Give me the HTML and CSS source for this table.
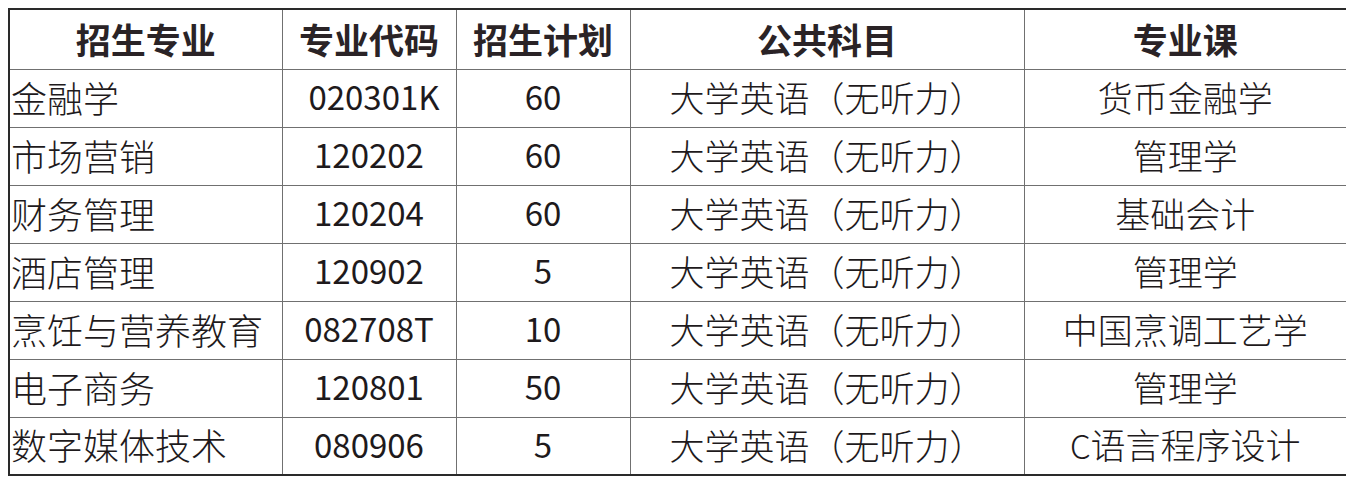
FILE: index.html
```html
<!DOCTYPE html>
<html lang="zh-CN">
<head>
<meta charset="utf-8">
<title>招生专业</title>
<link rel="stylesheet" href="styles.css">
</head>
<body>
<table class="plan">
  <colgroup>
    <col class="c1"><col class="c2"><col class="c3"><col class="c4"><col class="c5">
  </colgroup>
  <thead>
    <tr class="head">
      <th>招生专业</th><th>专业代码</th><th>招生计划</th><th>公共科目</th><th>专业课</th>
    </tr>
  </thead>
  <tbody>
    <tr><td class="name">金融学</td><td class="num code">020301K</td><td class="num">60</td><td>大学英语（无听力）</td><td>货币金融学</td></tr>
    <tr><td class="name">市场营销</td><td class="num">120202</td><td class="num">60</td><td>大学英语（无听力）</td><td>管理学</td></tr>
    <tr><td class="name">财务管理</td><td class="num">120204</td><td class="num">60</td><td>大学英语（无听力）</td><td>基础会计</td></tr>
    <tr><td class="name">酒店管理</td><td class="num">120902</td><td class="num">5</td><td>大学英语（无听力）</td><td>管理学</td></tr>
    <tr><td class="name">烹饪与营养教育</td><td class="num">082708T</td><td class="num">10</td><td>大学英语（无听力）</td><td>中国烹调工艺学</td></tr>
    <tr><td class="name">电子商务</td><td class="num">120801</td><td class="num">50</td><td>大学英语（无听力）</td><td>管理学</td></tr>
    <tr><td class="name">数字媒体技术</td><td class="num">080906</td><td class="num">5</td><td>大学英语（无听力）</td><td><span class="latin">C</span>语言程序设计</td></tr>
  </tbody>
</table>
</body>
</html>
```
FILE: styles.css
```css
html, body {
  background: #ffffff;
}
body {
  margin: 8px;
  font-family: "Noto Sans CJK SC", "Noto Sans", sans-serif;
  color: #1e1a1c;
}
.plan {
  border-collapse: collapse;
  table-layout: fixed;
  width: 1338px;
  border: 2px solid #2a2a2a;
}
.c1 { width: 273px; }
.c2 { width: 174px; }
.c3 { width: 174px; }
.c4 { width: 394px; }
.c5 { width: 323px; }
.plan th, .plan td {
  border: 1px solid #707070;
  padding: 0 0 3px 0;
  text-align: center;
  vertical-align: middle;
  font-size: 35px;
  font-weight: 300;
  line-height: 1;
  white-space: nowrap;
  overflow: hidden;
}
.plan th {
  font-size: 35px;
  font-weight: 700;
  color: #2a2326;
  padding-bottom: 2px;
}
.plan .head { height: 60px; }
.plan tbody tr { height: 58px; }
.plan td.name {
  text-align: left;
  padding-left: 1px;
  font-size: 36px;
}
.plan td.num {
  font-size: 33px;
  font-weight: 400;
}
.plan td.code {
  padding-left: 10px;
}
.latin {
  font-size: 33px;
}
```
